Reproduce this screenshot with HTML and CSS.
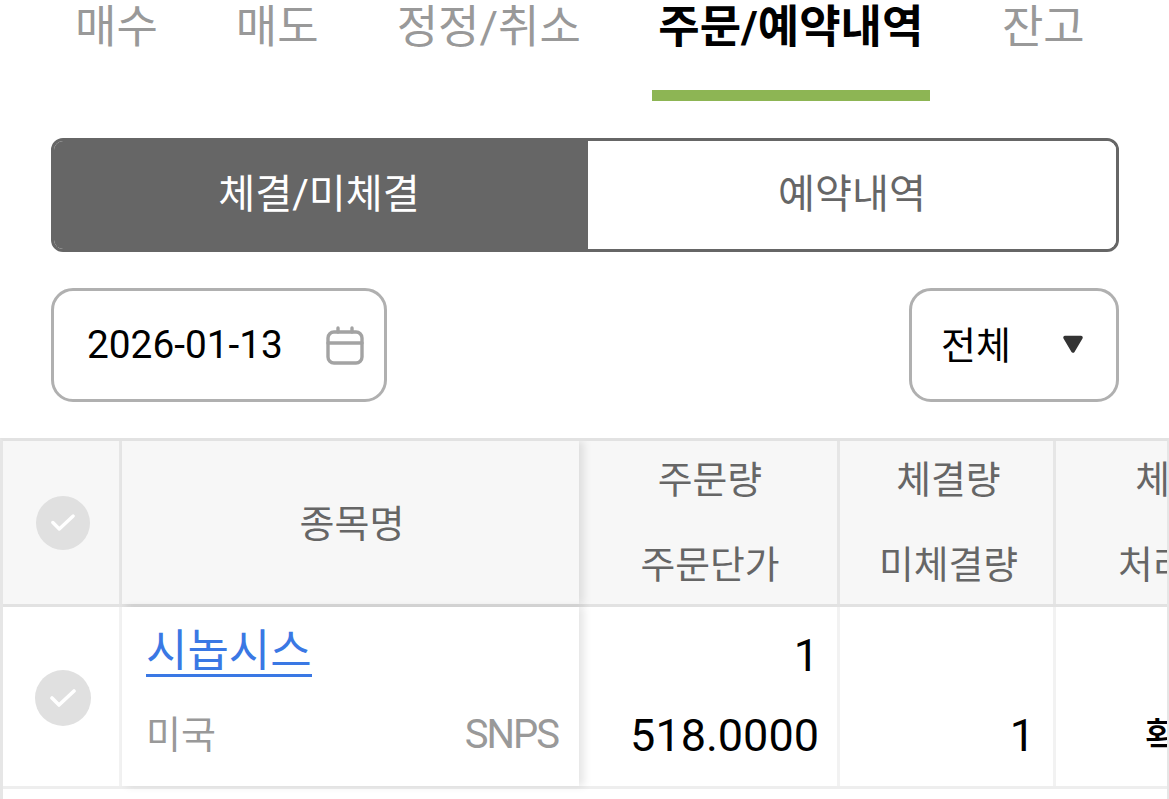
FILE: index.html
```html
<!DOCTYPE html>
<html lang="ko">
<head>
<meta charset="utf-8">
<title>주문/예약내역</title>
<link rel="stylesheet" href="styles.css">
</head>
<body>
<nav class="tabs">
  <a class="tab">매수</a>
  <a class="tab">매도</a>
  <a class="tab">정정/취소</a>
  <a class="tab active">주문/예약내역</a>
  <a class="tab">잔고</a>
</nav>
<div class="segment">
  <button class="seg on">체결/미체결</button>
  <button class="seg">예약내역</button>
</div>
<div class="filters">
  <div class="date">
    <span>2026-01-13</span>
    <svg class="cal" viewBox="0 0 38 39" width="38" height="39" fill="none" stroke="#a3a3a3" stroke-width="3.4" stroke-linecap="round"><rect x="2" y="6" width="34" height="31" rx="6"/><path d="M2 17H36M12 2V6M26 2V6"/></svg>
  </div>
  <div class="select">
    <span>전체</span>
    <svg class="caret" viewBox="0 0 24 20" width="24" height="20"><path d="M4 3.5H20L12 17Z" fill="#333" stroke="#333" stroke-width="3.5" stroke-linejoin="round"/></svg>
  </div>
</div>
<div class="table">
  <div class="row head">
    <div class="cell c0"><span class="check"><svg viewBox="0 0 26 18" width="24" height="17" fill="none" stroke="#fff" stroke-width="3.6" stroke-linecap="round" stroke-linejoin="round"><path d="M2 9L9 16L24 2"/></svg></span></div>
    <div class="cell c1">종목명</div>
    <div class="cell c2 stack"><span>주문량</span><span>주문단가</span></div>
    <div class="cell c3 stack"><span>체결량</span><span>미체결량</span></div>
    <div class="cell c4 stack"><span>체결가</span><span>처리구분</span></div>
  </div>
  <div class="row body">
    <div class="cell c0"><span class="check big"><svg viewBox="0 0 26 18" width="26" height="18" fill="none" stroke="#fff" stroke-width="3.6" stroke-linecap="round" stroke-linejoin="round"><path d="M2 9L9 16L24 2"/></svg></span></div>
    <div class="cell c1 name">
      <a class="link">시놉시스</a>
      <div class="meta"><span>미국</span><span class="sym">SNPS</span></div>
    </div>
    <div class="cell c2 nums"><span>1</span><span>518.0000</span></div>
    <div class="cell c3 nums"><span>&nbsp;</span><span>1</span></div>
    <div class="cell c4 nums left"><span>&nbsp;</span><span class="kr">확인</span></div>
  </div>
</div>
</body>
</html>
```
FILE: styles.css
```css
* { box-sizing: border-box; }
html, body { margin: 0; height: 799px; overflow: hidden; background: #fff; }
body { font-family: Roboto, "Noto Sans CJK KR", sans-serif; color: #000; }

.tabs { display: flex; gap: 66px; padding-left: 69px; height: 101px; }
.tab { padding: 1px 6px 0; height: 101px; font-size: 45px; line-height: 54px; color: #999; white-space: nowrap; }
.tab.active { margin-left: -1px; padding: 1px 6.5px 0; color: #000; font-weight: 700; border-bottom: 11px solid #8db554; }

.segment { display: flex; margin: 37px 50px 0 51px; height: 114px; border: 3px solid #666; border-radius: 12px; overflow: hidden; }
.seg { border: 0; padding: 0 0 10px; font: inherit; font-size: 40.2px; background: #fff; color: #666; flex: 1 1 0; }
.seg.on { flex: 0 0 534px; padding-right: 4px; background: #666; color: #fff; }

.filters { display: flex; justify-content: space-between; margin: 36px 50px 0 51px; }
.date, .select { display: flex; align-items: center; height: 114px; border: 3px solid #b0b0b0; border-radius: 22px; font-size: 38.8px; }
.date { width: 336px; padding: 0 20px 0 33px; justify-content: space-between; }
.select { width: 210px; padding: 0 31px 0 29px; justify-content: space-between; font-size: 38px; }
.date span { position: relative; top: -1px; }
.select span { position: relative; top: -3px; }
.caret { margin-top: -3px; }

.table { margin-top: 36px; width: 1169px; overflow: hidden; border-top: 3px solid #e2e2e2; border-left: 3px solid #e6e6e6; border-right: 2px solid #e6e6e6; height: 362px; }
.row { display: flex; width: 1400px; }
.cell { display: flex; align-items: center; justify-content: center; flex: none; }
.head { height: 166px; background: #f7f7f7; border-bottom: 3px solid #e2e2e2; color: #666; font-size: 37.8px; }
.body { height: 182px; border-bottom: 3px solid #eeeeee; }
.head .cell { border-right: 3px solid #e6e6e6; }
.body .cell { border-right: 3px solid #f2f2f2; }
.c0 { width: 119px; padding-left: 4px; }
.c1 { width: 457px; }
.c2 { width: 261px; }
.c3 { width: 216px; }
.c4 { width: 262px; }
.head .c1, .body .c1 { position: relative; z-index: 1; border-right: 0; box-shadow: 5px 0 8px rgba(0,0,0,.1); }
.body .c1 { background: #fff; }
.head .c1 { background: #f7f7f7; padding: 0 0 4px 3px; font-size: 38px; }

.check { display: flex; align-items: center; justify-content: center; width: 54px; height: 54px; border-radius: 50%; background: #e0e0e0; }
.check.big { width: 56px; height: 56px; margin-top: 3px; }

.stack { flex-direction: column; justify-content: flex-start; padding-left: 4px; }
.stack span { height: 83px; line-height: 78px; }
.stack span:first-child { margin-top: 0; }
.stack span:last-child { height: 80px; margin-top: 5px; }

.name { flex-direction: column; align-items: stretch; justify-content: flex-start; padding: 0 21px 0 24px; }
.link { align-self: flex-start; font-size: 45px; line-height: 62px; margin-top: 14px; color: #3a78e4; border-bottom: 3px solid #3a78e4; height: 56px; }
.meta { display: flex; justify-content: space-between; align-items: center; margin-top: 33px; font-size: 38px; line-height: 50px; color: #999; }
.sym { font-size: 40px; letter-spacing: -2px; }

.nums { flex-direction: column; align-items: flex-end; justify-content: flex-start; padding-right: 18px; font-size: 45px; }
.nums span { height: 80px; line-height: 82px; }
.nums span:first-child { margin-top: 8px; }
.left { align-items: flex-start; padding-left: 89px; }
.kr { font-size: 38px; font-weight: 500; position: relative; top: 1px; }
```
